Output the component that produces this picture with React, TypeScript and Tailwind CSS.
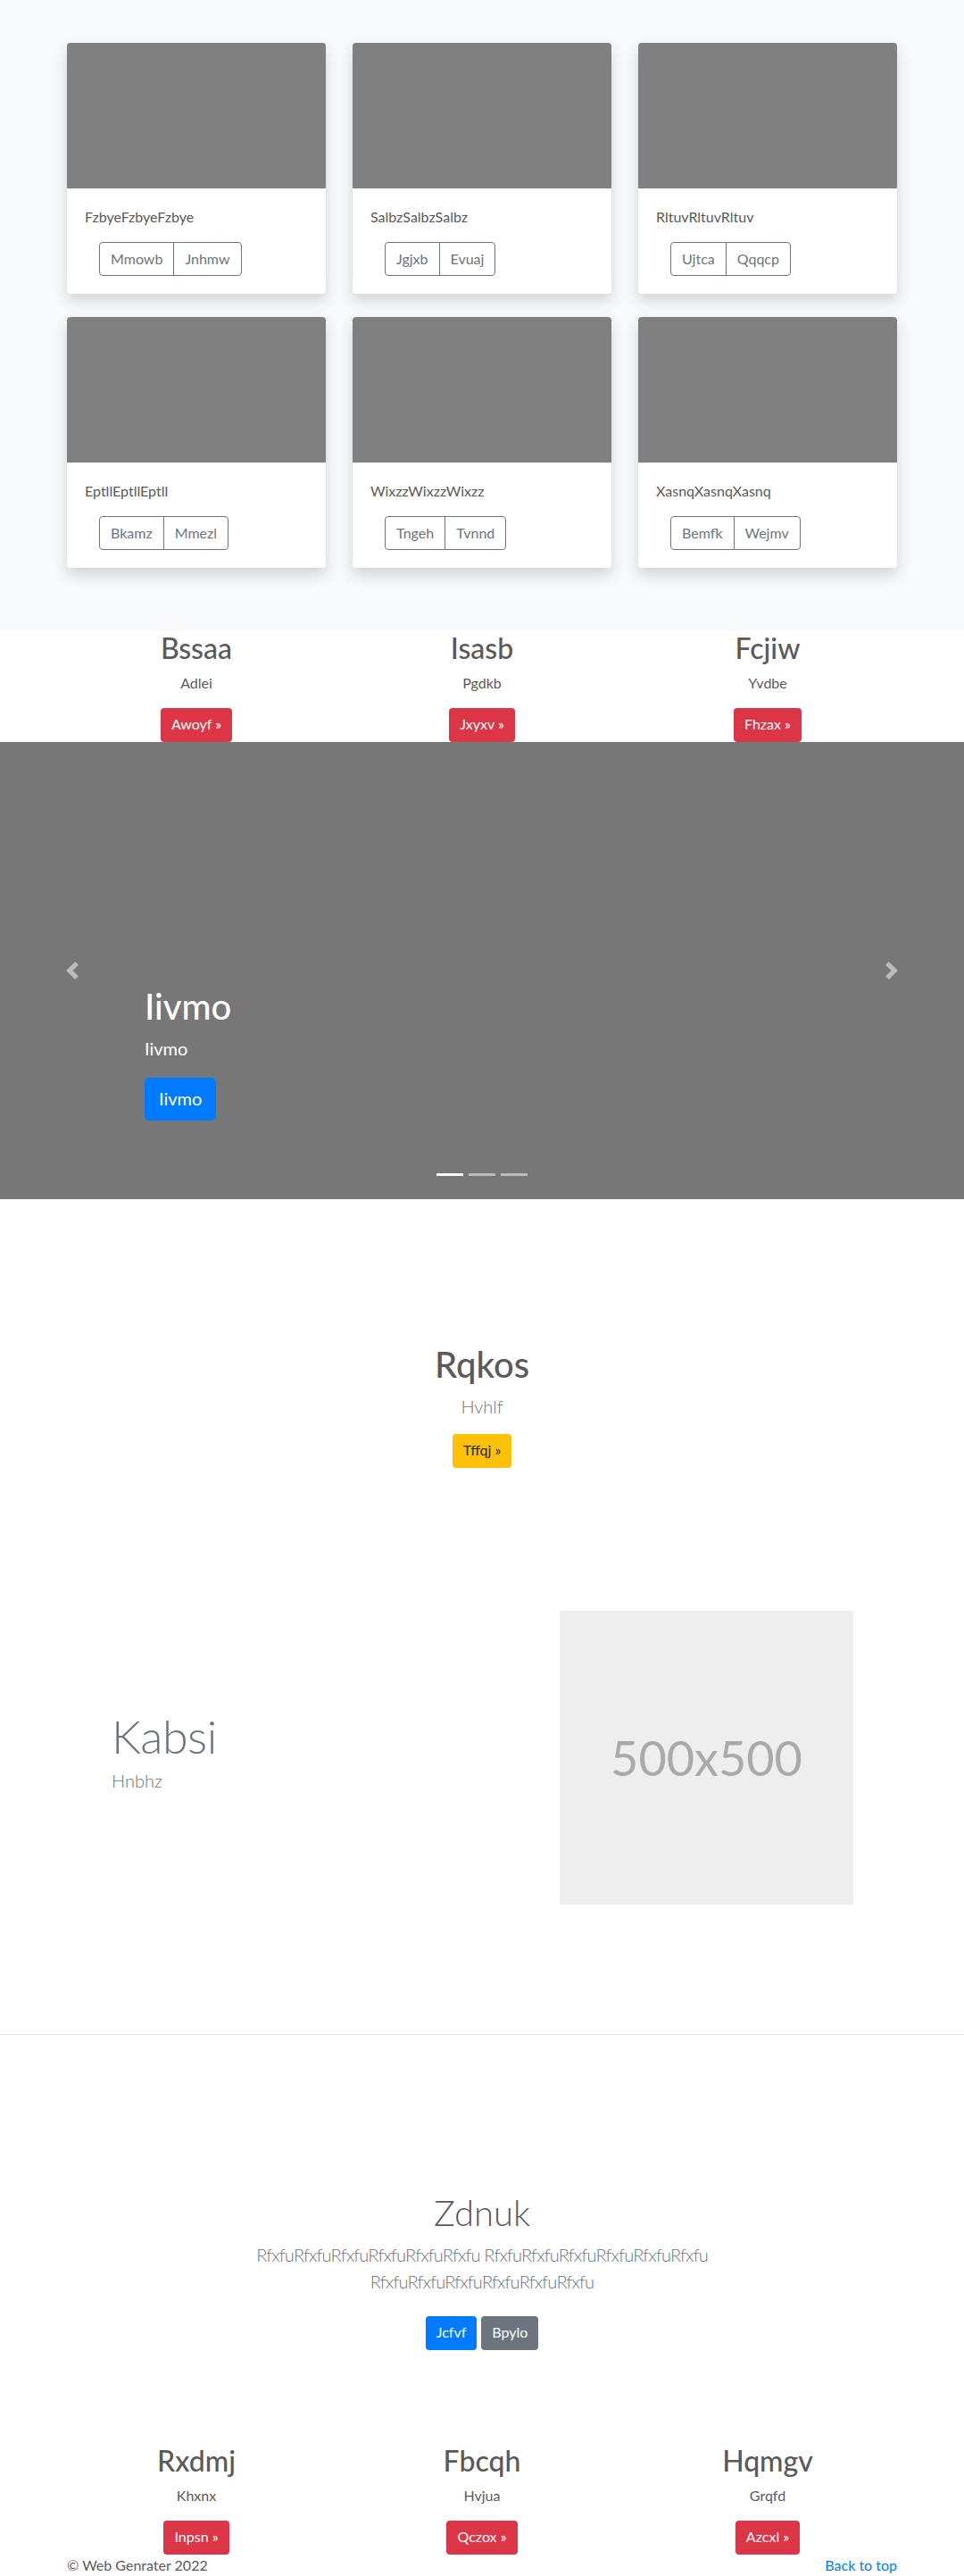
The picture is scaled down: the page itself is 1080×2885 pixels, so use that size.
const cards = [
  { title: 'FzbyeFzbyeFzbye', btns: ['Mmowb', 'Jnhmw'] },
  { title: 'SalbzSalbzSalbz', btns: ['Jgjxb', 'Evuaj'] },
  { title: 'RltuvRltuvRltuv', btns: ['Ujtca', 'Qqqcp'] },
  { title: 'EptllEptllEptll', btns: ['Bkamz', 'Mmezl'] },
  { title: 'WixzzWixzzWixzz', btns: ['Tngeh', 'Tvnnd'] },
  { title: 'XasnqXasnqXasnq', btns: ['Bemfk', 'Wejmv'] },
]

const topCols = [
  { h: 'Bssaa', p: 'Adlei', b: 'Awoyf' },
  { h: 'Isasb', p: 'Pgdkb', b: 'Jxyxv' },
  { h: 'Fcjiw', p: 'Yvdbe', b: 'Fhzax' },
]

const bottomCols = [
  { h: 'Rxdmj', p: 'Khxnx', b: 'Inpsn' },
  { h: 'Fbcqh', p: 'Hvjua', b: 'Qczox' },
  { h: 'Hqmgv', p: 'Grqfd', b: 'Azcxl' },
]

function Columns({ items }: { items: { h: string; p: string; b: string }[] }) {
  return (
    <div className="w-[960px] mx-auto px-[15px] grid grid-cols-3 gap-x-[30px] text-center">
      {items.map((c) => (
        <div key={c.h} className="flex flex-col items-center">
          <h2 className="text-[32px] leading-[38px] font-medium mb-2">{c.h}</h2>
          <p className="text-base leading-6 mb-4">{c.p}</p>
          <a className="h-[38px] px-3 py-[6px] text-base leading-6 rounded bg-[#dc3545] text-white">{c.b} &raquo;</a>
        </div>
      ))}
    </div>
  )
}

function Chevron({ dir }: { dir: 'prev' | 'next' }) {
  return (
    <svg width="20" height="20" viewBox="0 0 8 8" fill="#fff" className="opacity-50">
      {dir === 'prev'
        ? <path d="M5.25 0l-4 4 4 4 1.5-1.5L4.25 4l2.5-2.5L5.25 0z" />
        : <path d="M2.75 0l-1.5 1.5L3.75 4l-2.5 2.5L2.75 8l4-4-4-4z" />}
    </svg>
  )
}

export default function App() {
  return (
    <div className="font-['Lato',sans-serif] text-[#5a5a5a] bg-white w-[1080px]">
      {/* album */}
      <section className="bg-[#f8f9fa] pt-12 pb-[71px]">
        <div className="w-[960px] mx-auto px-[15px] grid grid-cols-3 gap-x-[30px] gap-y-[26px]">
          {cards.map((c) => (
            <div key={c.title} className="bg-white rounded shadow-[0_8px_16px_rgba(0,0,0,0.15)]">
              <div className="h-[163px] bg-[#808080] rounded-t" />
              <div className="p-5">
                <p className="text-base leading-6 mb-4">{c.title}</p>
                <div className="flex ml-4">
                  {c.btns.map((b, i) => (
                    <span
                      key={b}
                      className={
                        i === 0
                          ? 'h-[38px] px-3 py-[6px] text-base leading-6 border border-[#6c757d] text-[#6c757d] rounded-l'
                          : 'h-[38px] px-3 py-[6px] text-base leading-6 border border-[#6c757d] text-[#6c757d] rounded-r -ml-px'
                      }
                    >
                      {b}
                    </span>
                  ))}
                </div>
              </div>
            </div>
          ))}
        </div>
      </section>

      <Columns items={topCols} />

      {/* carousel */}
      <div className="relative h-[512px] bg-[#777] flex flex-col justify-end px-[162px] pb-[88px] text-white">
        <h1 className="text-[40px] leading-[48px] font-medium mb-2">Iivmo</h1>
        <p className="text-[20px] leading-[30px] mb-[18px]">Iivmo</p>
        <div>
          <a className="inline-block h-[48px] px-4 py-2 text-[20px] leading-[30px] rounded-[5px] bg-[#007bff] text-white">Iivmo</a>
        </div>
        <div className="absolute left-0 top-0 bottom-0 w-[162px] flex items-center justify-center">
          <Chevron dir="prev" />
        </div>
        <div className="absolute right-0 top-0 bottom-0 w-[162px] flex items-center justify-center">
          <Chevron dir="next" />
        </div>
        <div className="absolute bottom-[26px] left-1/2 -translate-x-1/2 flex gap-[6px]">
          <span className="w-[30px] h-[3px] bg-white" />
          <span className="w-[30px] h-[3px] bg-white opacity-50" />
          <span className="w-[30px] h-[3px] bg-white opacity-50" />
        </div>
      </div>

      {/* intro */}
      <section className="pt-[161px] text-center flex flex-col items-center">
        <h1 className="text-[40px] leading-[48px] font-medium mb-2">Rqkos</h1>
        <p className="text-[20px] leading-[30px] font-light text-[#6c757d] mb-4">Hvhlf</p>
        <a className="h-[38px] px-3 py-[6px] text-base leading-6 rounded bg-[#ffc107] text-[#212529]">Tffqj &raquo;</a>
      </section>

      {/* featurette */}
      <section className="mt-[160px] w-[960px] mx-auto px-[15px] flex items-center">
        <div className="flex-1 pl-[50px] text-[#6c757d]">
          <h2 className="text-[52px] leading-[62px] font-light tracking-[-0.5px] mb-1">Kabsi</h2>
          <p className="text-[20px] leading-[30px] font-light mb-4">Hnbhz</p>
        </div>
        <div className="w-[329px] h-[329px] mr-[49px] bg-[#eee] flex items-center justify-center text-[#aaa] text-[54px]">
          500x500
        </div>
      </section>

      <hr className="mt-[145px] border-0 border-t border-black/10" />

      {/* jumbotron */}
      <section className="pt-[175px] text-center">
        <h1 className="text-[40px] leading-[48px] font-light mb-2">Zdnuk</h1>
        <p className="max-w-[610px] mx-auto text-[20px] leading-[30px] font-light tracking-[-0.8px] text-[#6c757d] mb-6">
          RfxfuRfxfuRfxfuRfxfuRfxfuRfxfu RfxfuRfxfuRfxfuRfxfuRfxfuRfxfu RfxfuRfxfuRfxfuRfxfuRfxfuRfxfu
        </p>
        <div className="flex justify-center gap-[5px]">
          <a className="h-[38px] px-3 py-[6px] text-base leading-6 rounded bg-[#007bff] text-white">Jcfvf</a>
          <a className="h-[38px] px-3 py-[6px] text-base leading-6 rounded bg-[#6c757d] text-white">Bpylo</a>
        </div>
      </section>

      <div className="mt-[105px]">
        <Columns items={bottomCols} />
      </div>

      <footer className="w-[960px] mx-auto px-[15px] flex justify-between text-base leading-6">
        <p>&copy; Web Genrater 2022</p>
        <a className="text-[#007bff]">Back to top</a>
      </footer>
    </div>
  )
}
